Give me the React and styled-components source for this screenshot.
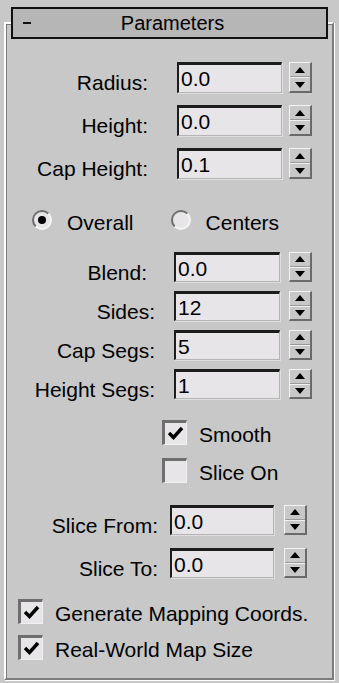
import React from "react";
import styled, { createGlobalStyle } from "styled-components";

const GlobalStyle = createGlobalStyle`
  html, body { margin: 0; padding: 0; background: #c8c8c8; }
  body { font-family: "Liberation Sans", Arial, sans-serif; color: #000; }
`;

const Root = styled.div`
  width: 339px;
  height: 683px;
  box-sizing: border-box;
  padding: 22px 5px 3px 4px;
  background: #c8c8c8;
`;

const Frame = styled.div`
  box-sizing: border-box;
  height: 658px;
  border-style: solid;
  border-width: 2px;
  border-color: #ffffff #7c7c7c #7c7c7c #ffffff;
  box-shadow: inset 1px 1px 0 #7c7c7c, 1px 1px 0 #ffffff;
  display: flex;
  flex-direction: column;
`;

const Header = styled.div`
  margin: -17px 4px 0 5px;
  height: 32px;
  box-sizing: border-box;
  border: 2px solid #111;
  background: #b6b6b6;
  display: flex;
  align-items: center;
  position: relative;
  font-size: 20px;
`;

const Minus = styled.span`
  width: 8px;
  height: 2px;
  background: #111;
  margin-left: 10px;
`;

const HeaderTitle = styled.span`
  flex: 1;
  text-align: center;
  margin-right: 12px;
  line-height: 28px;
`;

const Section = styled.div`
  display: flex;
  flex-direction: column;
  margin-top: ${(p) => p.$top}px;
  gap: ${(p) => p.$gap || 0}px;
`;

const Row = styled.div`
  display: flex;
  align-items: stretch;
  height: ${(p) => p.$h}px;
`;

const Label = styled.div`
  width: ${(p) => p.$right - 6}px;
  text-align: right;
  font-size: 21px;
  line-height: 1;
  padding-top: 10px;
  box-sizing: border-box;
  padding-right: ${(p) => p.$pad || 0}px;
  white-space: nowrap;
`;

const Field = styled.div`
  margin-left: ${(p) => p.$gap}px;
  width: ${(p) => p.$w}px;
  box-sizing: border-box;
  background: #e8e5e8;
  border-style: solid;
  border-width: 3px 1px 1px 2px;
  border-color: #1c1c1c #b4b4b4 #b4b4b4 #1c1c1c;
  box-shadow: 1px 1px 0 #dedede;
  font-size: 21px;
  line-height: 1;
  padding: 3px 0 0 2px;
`;

const Spin = styled.div`
  margin-left: ${(p) => p.$gap}px;
  width: 23px;
  box-sizing: border-box;
  display: flex;
  flex-direction: column;
  border-style: solid;
  border-width: 1px 2px 2px 1px;
  border-color: #f4f4f4 #6a6a6a #6a6a6a #f4f4f4;
  background: #c8c8c8;
`;

const SpinHalf = styled.div`
  flex: 1;
  display: flex;
  align-items: center;
  justify-content: center;
  border-top: ${(p) => (p.$lower ? "1px solid #f0f0f0" : "none")};
  border-bottom: ${(p) => (p.$lower ? "none" : "1px solid #9a9a9a")};
`;

const Arrow = ({ down }) => (
  <svg width="10" height="6" viewBox="0 0 10 6">
    <path d={down ? "M0 0 H10 L5 6 Z" : "M0 6 H10 L5 0 Z"} fill="#000" />
  </svg>
);

const Spinner = ({ gap }) => (
  <Spin $gap={gap}>
    <SpinHalf>
      <Arrow />
    </SpinHalf>
    <SpinHalf $lower>
      <Arrow down />
    </SpinHalf>
  </Spin>
);

const SpinnerRow = ({ label, value, g, pad }) => (
  <Row $h={g.h}>
    <Label $right={g.labelRight} $pad={pad}>{label}</Label>
    <Field $gap={g.inputLeft - g.labelRight} $w={g.inputW}>{value}</Field>
    <Spinner gap={g.spinLeft - g.inputLeft - g.inputW} />
  </Row>
);

const RadioRow = styled.div`
  display: flex;
  align-items: center;
  height: 20px;
  font-size: 21px;
`;

const RadioItem = styled.label`
  display: flex;
  align-items: center;
  margin-left: ${(p) => p.$left}px;
`;

const RadioCircle = styled.span`
  width: 20px;
  height: 20px;
  box-sizing: border-box;
  border-radius: 50%;
  border-style: solid;
  border-width: 2px;
  border-color: #6e6e6e #f4f4f4 #f4f4f4 #6e6e6e;
  background: #e8e5e8;
  display: flex;
  align-items: center;
  justify-content: center;
  &::after {
    content: "";
    width: 8px;
    height: 8px;
    border-radius: 50%;
    background: ${(p) => (p.$on ? "#000" : "transparent")};
  }
`;

const RadioText = styled.span`
  margin-left: 15px;
  line-height: 1;
  padding-top: 4px;
`;

const CheckRow = styled.label`
  display: flex;
  align-items: center;
  height: 25px;
  margin-left: ${(p) => p.$left}px;
  font-size: 21px;
`;

const Box = styled.span`
  width: 25px;
  height: 25px;
  box-sizing: border-box;
  border-style: solid;
  border-width: 3px 1px 1px 3px;
  border-color: #6e6e6e #f0f0f0 #f0f0f0 #6e6e6e;
  background: #e8e5e8;
  display: flex;
  align-items: center;
  justify-content: center;
`;

const CheckText = styled.span`
  margin-left: 12px;
  line-height: 1;
  padding-top: 4px;
  white-space: nowrap;
`;

const Tick = () => (
  <svg width="17" height="15" viewBox="0 0 17 15">
    <path d="M2 7 L6.5 11.5 L15 2" fill="none" stroke="#000" strokeWidth="3.4" />
  </svg>
);

const Check = ({ left, on, children }) => (
  <CheckRow $left={left}>
    <Box>{on && <Tick />}</Box>
    <CheckText>{children}</CheckText>
  </CheckRow>
);

const G1 = { labelRight: 148, inputLeft: 177, inputW: 105, spinLeft: 289, h: 31 };
const G2 = { labelRight: 155, inputLeft: 174, inputW: 106, spinLeft: 289, h: 30 };
const G3 = { labelRight: 158, inputLeft: 170, inputW: 104, spinLeft: 284, h: 30 };

export default function App() {
  return (
    <>
      <GlobalStyle />
      <Root>
        <Frame>
          <Header>
            <Minus />
            <HeaderTitle>Parameters</HeaderTitle>
          </Header>

          <Section $top={23} $gap={12}>
            <SpinnerRow g={G1} label="Radius:" value="0.0" />
            <SpinnerRow g={G1} label="Height:" value="0.0" />
            <SpinnerRow g={G1} label="Cap Height:" value="0.1" />
          </Section>

          <Section $top={31}>
            <RadioRow>
              <RadioItem $left={26}>
                <RadioCircle $on />
                <RadioText>Overall</RadioText>
              </RadioItem>
              <RadioItem $left={37}>
                <RadioCircle />
                <RadioText>Centers</RadioText>
              </RadioItem>
            </RadioRow>
          </Section>

          <Section $top={22} $gap={9}>
            <SpinnerRow g={G2} label="Blend:" value="0.0" pad={8} />
            <SpinnerRow g={G2} label="Sides:" value="12" />
            <SpinnerRow g={G2} label="Cap Segs:" value="5" />
            <SpinnerRow g={G2} label="Height Segs:" value="1" />
          </Section>

          <Section $top={21} $gap={13}>
            <Check left={156} on>Smooth</Check>
            <Check left={156}>Slice On</Check>
          </Section>

          <Section $top={22} $gap={13}>
            <SpinnerRow g={G3} label="Slice From:" value="0.0" />
            <SpinnerRow g={G3} label="Slice To:" value="0.0" />
          </Section>

          <Section $top={21} $gap={11}>
            <Check left={12} on>Generate Mapping Coords.</Check>
            <Check left={12} on>Real-World Map Size</Check>
          </Section>
        </Frame>
      </Root>
    </>
  );
}
